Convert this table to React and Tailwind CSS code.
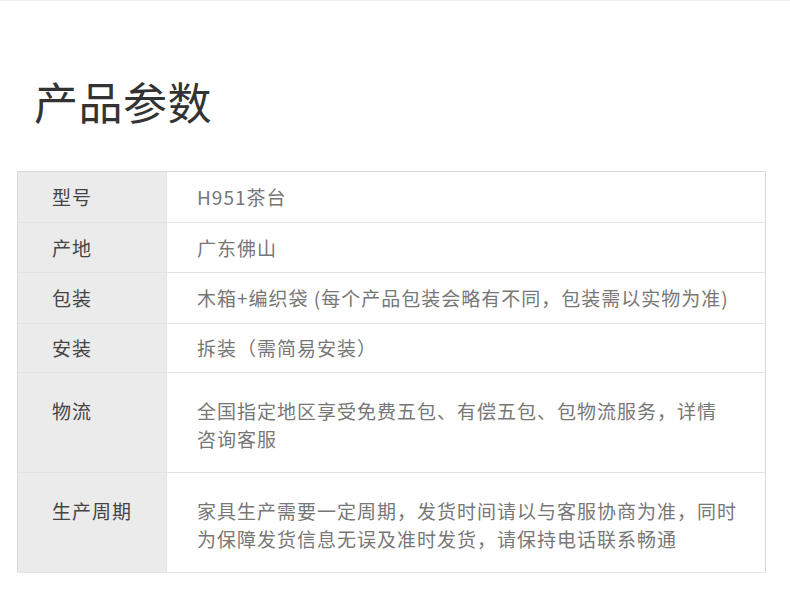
import React from 'react';

// 参数表数据（多行内容按原图断行）
const ROWS = [
  { label: '型号', lines: ['H951茶台'], h: 'h-[50px]' },
  { label: '产地', lines: ['广东佛山'], h: 'h-[50px]' },
  { label: '包装', lines: ['木箱+编织袋 (每个产品包装会略有不同，包装需以实物为准)'], h: 'h-[51px]' },
  { label: '安装', lines: ['拆装（需简易安装）'], h: 'h-[49px]' },
  { label: '物流', lines: ['全国指定地区享受免费五包、有偿五包、包物流服务，详情', '咨询客服'], h: 'h-[100px]', tall: true },
  {
    label: '生产周期',
    lines: ['家具生产需要一定周期，发货时间请以与客服协商为准，同时', '为保障发货信息无误及准时发货，请保持电话联系畅通'],
    h: 'h-[100px]',
    tall: true,
  },
];

export default function App() {
  return (
    <div
      className="w-[790px] h-[615px] bg-white border-t border-[#eeeeee] overflow-hidden"
      style={{ fontFamily: '"Noto Sans CJK SC", "Noto Sans", sans-serif' }}
    >
      <h1 className="pt-[78px] pl-[34px] text-[44px] leading-[44px] font-normal text-[#333333] tracking-[0.5px]">
        产品参数
      </h1>

      <div className="mt-[48px] ml-[17px] w-[749px] border border-[#d9d9d9] border-b-[#e6e6e6]">
        {ROWS.map((row, i) => (
          <div
            key={row.label}
            className={`flex ${row.h} ${i > 0 ? 'border-t border-[#e3e3e3]' : ''}`}
          >
            <div
              className={`w-[148px] shrink-0 bg-[#ebebeb] pl-[34px] text-[19px] tracking-[1px] text-[#444444] flex ${
                row.tall ? 'items-start pt-[24px]' : 'items-center'
              }`}
            >
              <span className="leading-[28px]">{row.label}</span>
            </div>
            <div
              className={`flex-1 border-l border-[#e3e3e3] pl-[30px] text-[19px] tracking-[1px] text-[#777777] flex ${
                row.tall ? 'items-start pt-[24px]' : 'items-center'
              }`}
            >
              <p className="leading-[28px] whitespace-nowrap">
                {row.lines.map((line, j) => (
                  <React.Fragment key={j}>
                    {j > 0 && <br />}
                    {line}
                  </React.Fragment>
                ))}
              </p>
            </div>
          </div>
        ))}
      </div>
    </div>
  );
}
